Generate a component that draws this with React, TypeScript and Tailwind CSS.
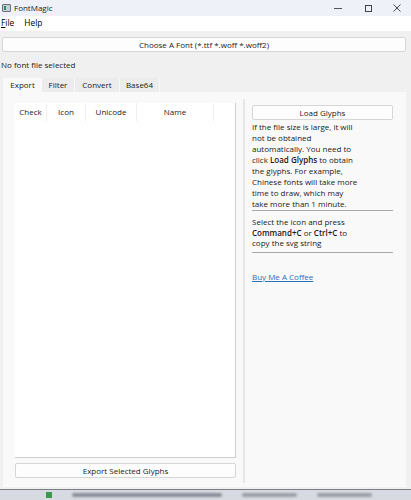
import React from 'react';

const font = { fontFamily: '"Open Sans", "Noto Sans", sans-serif' };

function TitleBar() {
  return (
    <div className="flex h-[16px] items-center bg-[#eef1f8] shrink-0">
      {/* app icon */}
      <div className="ml-[2px] flex h-[8px] w-[9px] items-center rounded-[1px] border border-[#6b6f78] bg-[#c7ccd6]">
        <div className="ml-[1px] h-[4px] w-[2px] bg-[#2f8f6a]" />
      </div>
      <span className="ml-[3px] text-[8px] text-[#1a1a1a]">FontMagic</span>
      <div className="ml-auto flex h-full items-center">
        <div className="flex h-full w-[30px] items-center justify-center">
          <div className="h-px w-[8px] bg-[#555]" />
        </div>
        <div className="flex h-full w-[30px] items-center justify-center">
          <div className="h-[7px] w-[7px] border border-[#444]" />
        </div>
        <div className="flex h-full w-[28px] items-center justify-center">
          <svg width="8" height="8" viewBox="0 0 8 8">
            <path d="M0.5 0.5 L7.5 7.5 M7.5 0.5 L0.5 7.5" stroke="#333" strokeWidth="0.9" />
          </svg>
        </div>
      </div>
    </div>
  );
}

function MenuBar() {
  return (
    <div className="flex h-[15px] items-center gap-[10px] bg-white pl-[1px] text-[8.4px] text-black shrink-0">
      <span>
        <span className="underline">F</span>ile
      </span>
      <span>Help</span>
    </div>
  );
}

function Tabs() {
  const tabs = [
    { name: 'Export', w: 'w-[39px]', active: true },
    { name: 'Filter', w: 'w-[33px]', active: false },
    { name: 'Convert', w: 'w-[45px]', active: false },
    { name: 'Base64', w: 'w-[40px]', active: false },
  ];
  return (
    <div className="ml-[3px] flex h-[14px] items-end">
      {tabs.map((t) => (
        <div
          key={t.name}
          className={`flex h-[14px] items-center justify-center text-[8px] text-[#1a1a1a] ${t.w} ${
            t.active ? 'bg-[#f9f9f9]' : 'border-r border-[#f7f7f7] bg-[#ececec]'
          }`}
        >
          {t.name}
        </div>
      ))}
    </div>
  );
}

function GlyphTable() {
  const cols = [
    { name: 'Check', w: 'w-[32px]' },
    { name: 'Icon', w: 'w-[39px]' },
    { name: 'Unicode', w: 'w-[51px]' },
    { name: 'Name', w: 'w-[77px]' },
  ];
  return (
    <div className="flex h-[355px] w-[221px] flex-col border-r border-b border-[#cfcfcf] bg-white">
      <div className="flex h-[18px]">
        {cols.map((c) => (
          <div
            key={c.name}
            className={`flex items-center justify-center border-r border-[#f0f0f0] text-[8px] text-[#1a1a1a] ${c.w}`}
          >
            {c.name}
          </div>
        ))}
      </div>
    </div>
  );
}

function Btn({ children, className }: { children: React.ReactNode; className: string }) {
  return (
    <div
      className={`flex items-center justify-center rounded-[2px] border border-[#d6d6d6] bg-[#fdfdfd] text-[8px] text-[#1a1a1a] ${className}`}
    >
      {children}
    </div>
  );
}

export default function App() {
  return (
    <div className="flex h-[500px] w-[411px] flex-col overflow-hidden bg-[#f0f0f0]" style={font}>
      <TitleBar />
      <MenuBar />

      <div className="flex flex-1 flex-col">
        <Btn className="mx-[2px] mt-[6px] h-[15px] w-[404px]">Choose A Font (*.ttf *.woff *.woff2)</Btn>
        <div className="mt-[7px] pl-[1px] text-[8px] leading-[11px] text-[#1a1a1a]">No font file selected</div>

        <div className="mt-[8px]">
          <Tabs />
          <div className="ml-[3px] flex h-[395px] w-[403px] bg-[#f9f9f9]">
            {/* left: glyph list */}
            <div className="flex flex-col pl-[12px] pt-[11px]">
              <GlyphTable />
              <Btn className="mt-[5px] h-[15px] w-[221px]">Export Selected Glyphs</Btn>
            </div>

            {/* splitter */}
            <div className="ml-[7px] mt-[7px] h-[384px] w-[2px] bg-[#e6e6e6]" />

            {/* right: info */}
            <div className="ml-[7px] flex w-[141px] flex-col pt-[13px] text-[8px] leading-[11px] text-[#1a1a1a]">
              <Btn className="h-[15px] w-[141px]">Load Glyphs</Btn>
              <div className="mt-[1px] whitespace-nowrap">
                If the file size is large, it will
                <br />
                not be obtained
                <br />
                automatically. You need to
                <br />
                click <span className="font-semibold">Load Glyphs</span> to obtain
                <br />
                the glyphs. For example,
                <br />
                Chinese fonts will take more
                <br />
                time to draw, which may
                <br />
                take more than 1 minute.
              </div>
              <div className="mt-[1px] h-px w-[141px] bg-[#a8a8a8]" />
              <div className="mt-[6px] whitespace-nowrap leading-[10.5px]">
                Select the icon and press
                <br />
                <span className="font-semibold">Command+C</span> or <span className="font-semibold">Ctrl+C</span> to
                <br />
                copy the svg string
              </div>
              <div className="mt-[3px] h-px w-[141px] bg-[#a8a8a8]" />
              <div className="mt-[18px] text-[#2a6fb8] underline">Buy Me A Coffee</div>
            </div>
          </div>
        </div>
      </div>

      {/* desktop taskbar strip behind the window */}
      <div className="flex h-[11px] items-center gap-[20px] border-t border-[#7a7d84] bg-[#d7dae0] pl-[46px] shrink-0">
        <div className="h-[6px] w-[6px] bg-[#3a9a4a]" />
        <div className="h-[4px] w-[150px] rounded-sm bg-[#8a8f9a] blur-[1px]" />
        <div className="h-[4px] w-[55px] rounded-sm bg-[#9a9fa8] blur-[1px]" />
        <div className="h-[4px] w-[55px] rounded-sm bg-[#9a9fa8] blur-[1px]" />
      </div>
    </div>
  );
}
